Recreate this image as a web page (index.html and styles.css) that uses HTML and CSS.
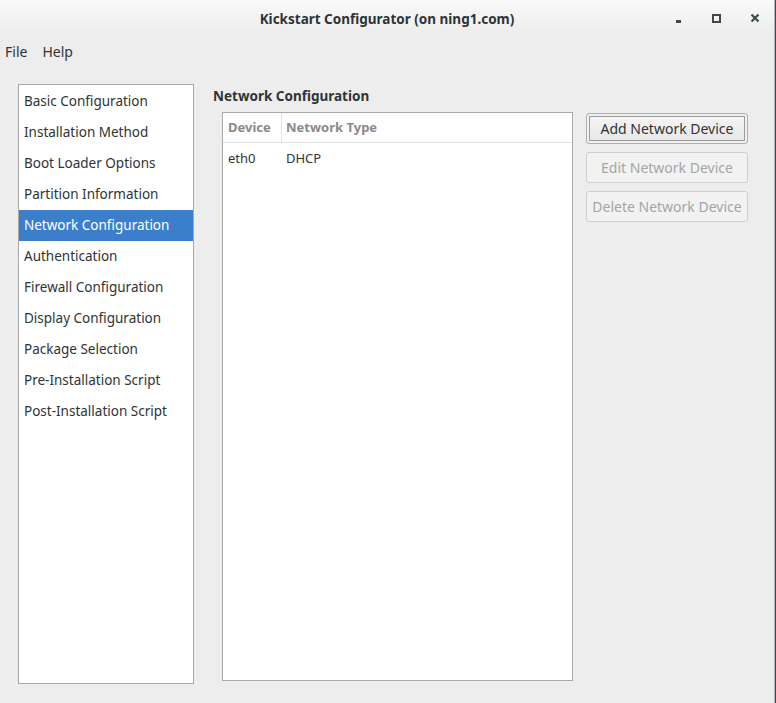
FILE: index.html
```html
<html>
  <head>
    <title>Kickstart Configurator</title>
    <link rel="stylesheet" href="styles.css">
  </head>
  <body>
    <div class="window">
      <div class="titlebar">
        <span class="title">Kickstart Configurator (on ning1.com)</span>
        <div class="controls">
          <span class="btn-min"></span>
          <span class="btn-max"></span>
          <svg class="btn-close" width="10" height="10" viewBox="0 0 10 10">
            <path d="M1.5 1.5 L8.5 8.5 M8.5 1.5 L1.5 8.5" stroke="#3d4a50" stroke-width="2.2" />
          </svg>
        </div>
      </div>

      <div class="menubar">
        <span>File</span>
        <span>Help</span>
      </div>

      <div class="main">
        <ul class="sidebar">
          <li>Basic Configuration</li>
          <li>Installation Method</li>
          <li>Boot Loader Options</li>
          <li>Partition Information</li>
          <li class="selected">Network Configuration</li>
          <li>Authentication</li>
          <li>Firewall Configuration</li>
          <li>Display Configuration</li>
          <li>Package Selection</li>
          <li>Pre-Installation Script</li>
          <li>Post-Installation Script</li>
        </ul>

        <div class="panel">
          <h2>Network Configuration</h2>
          <div class="panel-body">
            <div class="table">
              <div class="row head">
                <div class="col device">Device</div>
                <div class="col type">Network Type</div>
              </div>
              <div class="row">
                <div class="col device">eth0</div>
                <div class="col type">DHCP</div>
              </div>
            </div>
            <div class="buttons">
              <button class="default">Add Network Device</button>
              <button disabled="disabled">Edit Network Device</button>
              <button disabled="disabled">Delete Network Device</button>
            </div>
          </div>
        </div>
      </div>
    </div>
    <div class="edge"></div>
  </body>
</html>
```

FILE: styles.css
```css
/* Window */
body {
  margin: 0;
  background: #ededed;
  font-family: "Noto Sans", "DejaVu Sans", sans-serif;
  font-size: 13px;
  color: #2e3436;
  width: 776px;
  height: 703px;
  overflow: hidden;
  position: relative;
}
.window {
  width: 774px;
}
.edge {
  position: absolute;
  top: 0;
  right: 0;
  width: 1px;
  height: 703px;
  border-left: 1px solid #b8b8b8;
  background: #2f4f55;
}

/* Title bar */
.titlebar {
  height: 37px;
  background: linear-gradient(#f9f9f9, #ececec);
  display: flex;
  align-items: center;
  justify-content: center;
  position: relative;
}
.title {
  font-weight: bold;
  font-size: 13.5px;
  color: #2e3436;
  margin-left: 0;
}
.controls {
  position: absolute;
  right: 14px;
  top: 13px;
  display: flex;
  align-items: center;
}
.btn-min {
  width: 5px;
  height: 3px;
  background: #3d4a50;
  margin-top: 7px;
  margin-right: 31px;
}
.btn-max {
  width: 5px;
  height: 5px;
  border: 2px solid #3d4a50;
  margin-right: 29px;
}

/* Menu bar */
.menubar {
  height: 29px;
  display: flex;
  align-items: center;
  gap: 15px;
  padding-left: 5px;
  font-size: 14px;
}

/* Main area */
.main {
  display: flex;
  padding: 18px 0 0 18px;
}
.sidebar {
  list-style: none;
  margin: 0;
  padding: 1px 0 0 0;
  width: 174px;
  height: 597px;
  background: #fff;
  border: 1px solid #a9a9a9;
  font-size: 13.5px;
}
.sidebar li {
  height: 31px;
  line-height: 31px;
  padding-left: 5px;
  color: #2e3436;
}
.sidebar li.selected {
  background: #3b7fcc;
  color: #fff;
}

/* Panel */
.panel {
  margin-left: 19px;
}
.panel h2 {
  margin: 3px 0 7px 0;
  font-size: 13.5px;
  font-weight: bold;
  line-height: 18px;
}
.panel-body {
  display: flex;
  margin-left: 9px;
}
.table {
  width: 349px;
  height: 567px;
  background: #fff;
  border: 1px solid #a9a9a9;
}
.row {
  display: flex;
  height: 31px;
  line-height: 31px;
}
.row.head {
  height: 29px;
  line-height: 29px;
  border-bottom: 1px solid #e2e2e2;
  color: #8a8a8a;
  font-weight: bold;
}
.col {
  padding-left: 5px;
}
.col.device {
  width: 53px;
}
.row.head .col.device {
  border-right: 1px solid #e2e2e2;
}
.row.head .col.type {
  padding-left: 4px;
}

/* Buttons */
.buttons {
  display: flex;
  flex-direction: column;
  gap: 8px;
  margin-left: 13px;
  padding-top: 1px;
}
.buttons button {
  width: 162px;
  height: 31px;
  font-family: "Noto Sans", "DejaVu Sans", sans-serif;
  font-size: 14px;
  color: #2e3436;
  background: #f4f4f4;
  border: 1px solid #c8c8c8;
  border-radius: 3px;
  padding: 0;
}
.buttons button.default {
  border-color: #b0b0b0;
  box-shadow: inset 0 0 0 2px #f0f0f0, inset 0 0 0 3px #9c9c9c;
  background: linear-gradient(#f6f6f6, #e6e6e6);
}
.buttons button[disabled] {
  color: #a3a6a6;
  background: #f2f2f2;
  border-color: #cfcfcf;
}
```
